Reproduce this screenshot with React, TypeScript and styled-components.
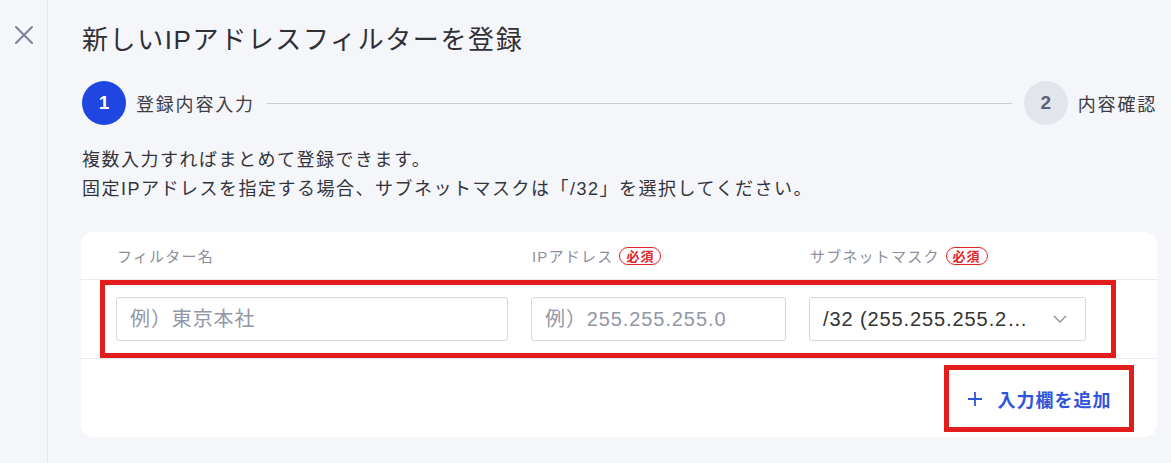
import styled, { createGlobalStyle } from "styled-components"

const GlobalStyle = createGlobalStyle`
    * {
        box-sizing: border-box;
    }
    body {
        margin: 0;
        background: #f5f6fa;
        font-family: "Liberation Sans", "Noto Sans CJK JP", sans-serif;
        color: #333;
    }
`

interface StepProps {
    active?: boolean
}

const columns = [
    { label: "フィルター名", required: false },
    { label: "IPアドレス", required: true },
    { label: "サブネットマスク", required: true },
]

function App() {
    return (
        <>
            <GlobalStyle />
            <Page>
                <Sidebar>
                    <CloseButton aria-label="閉じる">
                        <svg width="20" height="20" viewBox="0 0 20 20">
                            <path
                                d="M2 2 L18 18 M18 2 L2 18"
                                stroke="#7d8193"
                                strokeWidth="2"
                                strokeLinecap="round"
                            />
                        </svg>
                    </CloseButton>
                </Sidebar>

                <Main>
                    <Title>新しいIPアドレスフィルターを登録</Title>

                    <Stepper>
                        <Step>
                            <StepNumber active>1</StepNumber>
                            <StepLabel>登録内容入力</StepLabel>
                        </Step>
                        <StepLine />
                        <Step>
                            <StepNumber>2</StepNumber>
                            <StepLabel>内容確認</StepLabel>
                        </Step>
                    </Stepper>

                    <Description>
                        複数入力すればまとめて登録できます。
                        <br />
                        固定IPアドレスを指定する場合、サブネットマスクは「/32」を選択してください。
                    </Description>

                    <Card>
                        <HeaderRow>
                            {columns.map((col) => (
                                <HeaderLabel key={col.label}>
                                    {col.label}
                                    {col.required && <Required>必須</Required>}
                                </HeaderLabel>
                            ))}
                        </HeaderRow>

                        <InputRow>
                            <Highlight>
                                <Fields>
                                    <TextInput placeholder="例）東京本社" />
                                    <TextInput placeholder="例）255.255.255.0" />
                                    <SelectBox type="button">
                                        <SelectValue>/32 (255.255.255.255)</SelectValue>
                                        <svg width="14" height="8" viewBox="0 0 14 8">
                                            <path
                                                d="M1 1 L7 7 L13 1"
                                                fill="none"
                                                stroke="#8d91a3"
                                                strokeWidth="1.4"
                                            />
                                        </svg>
                                    </SelectBox>
                                </Fields>
                            </Highlight>
                        </InputRow>

                        <Footer>
                            <AddButton type="button">
                                <svg width="16" height="16" viewBox="0 0 16 16">
                                    <path
                                        d="M8 1 V15 M1 8 H15"
                                        stroke="#2f55dc"
                                        strokeWidth="1.8"
                                    />
                                </svg>
                                入力欄を追加
                            </AddButton>
                        </Footer>
                    </Card>
                </Main>
            </Page>
        </>
    )
}

export default App

const Page = styled.div`
    display: flex;
    min-height: 100vh;
`

const Sidebar = styled.aside`
    width: 48px;
    flex-shrink: 0;
    border-right: 1px solid #e3e5ec;
    display: flex;
    justify-content: center;
    align-items: flex-start;
    padding-top: 25px;
`

const CloseButton = styled.button`
    width: 20px;
    height: 20px;
    padding: 0;
    border: none;
    background: none;
    cursor: pointer;
    display: flex;
`

const Main = styled.main`
    flex: 1;
    padding: 22px 14px 0 34px;
`

const Title = styled.h1`
    margin: 0;
    font-size: 26px;
    font-weight: 400;
    line-height: 36px;
    letter-spacing: 1.6px;
    color: #2f3036;
`

const Stepper = styled.div`
    margin-top: 23px;
    display: flex;
    align-items: center;
`

const Step = styled.div`
    display: flex;
    align-items: center;
    gap: 10px;
`

const StepNumber = styled.span<StepProps>`
    width: 44px;
    height: 44px;
    border-radius: 50%;
    display: flex;
    justify-content: center;
    align-items: center;
    font-size: 19px;
    font-weight: bold;
    background: ${(p) => (p.active ? "#1f46e0" : "#e3e5ed")};
    color: ${(p) => (p.active ? "#ffffff" : "#5c6075")};
`

const StepLabel = styled.span`
    font-size: 18px;
    letter-spacing: 1.8px;
    color: #3c3d44;
`

const StepLine = styled.div`
    flex: 1;
    height: 1px;
    margin: 0 12px;
    background: #c9cbd6;
`

const Description = styled.p`
    margin: 21px 0 0;
    font-size: 18px;
    line-height: 29px;
    letter-spacing: 1.5px;
    color: #33343a;
`

const Card = styled.section`
    margin-top: 28px;
    margin-left: -1px;
    background: #ffffff;
    border-radius: 12px;
    overflow: hidden;
`

const HeaderRow = styled.div`
    height: 48px;
    display: grid;
    grid-template-columns: 392px 255px 277px;
    column-gap: 23px;
    align-items: center;
    padding-left: 36px;
    border-bottom: 1px solid #e7e9ee;
`

const HeaderLabel = styled.div`
    display: flex;
    align-items: center;
    gap: 6px;
    font-size: 15px;
    letter-spacing: 1.2px;
    color: #8c8f9a;
`

const Required = styled.span`
    height: 18px;
    padding: 0 6px;
    border: 1.5px solid #e2262c;
    border-radius: 9px;
    display: inline-flex;
    align-items: center;
    font-size: 13px;
    font-weight: bold;
    letter-spacing: 1px;
    color: #e2262c;
`

const InputRow = styled.div`
    border-bottom: 1px solid #e7e9ee;
    padding-left: 19px;
`

const Highlight = styled.div`
    width: fit-content;
    border: 5px solid #e31c1c;
    padding: 12px 25px 12px 11px;
`

const Fields = styled.div`
    display: grid;
    grid-template-columns: 392px 255px 277px;
    column-gap: 23px;
`

const TextInput = styled.input`
    height: 44px;
    padding: 0 13px;
    border: 1px solid #d4d7df;
    border-radius: 3px;
    font-family: inherit;
    font-size: 20px;
    letter-spacing: 0.9px;
    color: #333;
    outline: none;

    &::placeholder {
        color: #9296a6;
    }
`

const SelectBox = styled.button`
    height: 44px;
    padding: 0 18px 0 13px;
    border: 1px solid #d4d7df;
    border-radius: 3px;
    background: #ffffff;
    display: flex;
    align-items: center;
    gap: 22px;
    font-family: inherit;
    font-size: 20px;
    letter-spacing: 0.9px;
    color: #333;
    cursor: pointer;
`

const SelectValue = styled.span`
    flex: 1;
    min-width: 0;
    text-align: left;
    white-space: nowrap;
    overflow: hidden;
    text-overflow: ellipsis;
`

const Footer = styled.div`
    display: flex;
    justify-content: flex-end;
    padding: 6px 23px 5px;
`

const AddButton = styled.button`
    width: 190px;
    height: 67px;
    border: 5px solid #e31c1c;
    background: #ffffff;
    padding: 0 12px;
    display: flex;
    justify-content: center;
    align-items: center;
    gap: 15px;
    font-family: inherit;
    font-size: 18px;
    font-weight: bold;
    letter-spacing: 1px;
    color: #2f55dc;
    cursor: pointer;
`
